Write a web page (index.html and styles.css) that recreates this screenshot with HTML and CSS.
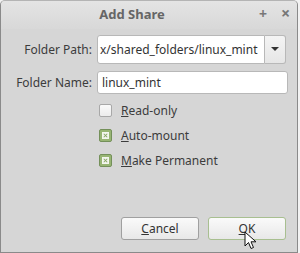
FILE: index.html
```html
<!DOCTYPE html>
<html>
<head>
<meta charset="utf-8">
<link rel="stylesheet" href="styles.css">
</head>
<body>
<div class="window">
  <div class="titlebar">
    <span class="title">Add Share</span>
    <span class="tb-btn tb-max">+</span>
    <span class="tb-btn tb-close">×</span>
  </div>
  <div class="content">
    <div class="row row-path">
      <span class="label">Folder Path:</span>
      <div class="combo">
        <div class="entry combo-entry">x/shared_folders/linux_mint</div>
        <div class="combo-btn"><span class="arrow"></span></div>
      </div>
    </div>
    <div class="row row-name">
      <span class="label">Folder Name:</span>
      <div class="entry name-entry">linux_mint</div>
    </div>
    <div class="checks">
      <div class="check"><span class="box"></span><span class="ctext"><u>R</u>ead-only</span></div>
      <div class="check"><span class="box on"><span class="mark"></span></span><span class="ctext"><u>A</u>uto-mount</span></div>
      <div class="check"><span class="box on"><span class="mark"></span></span><span class="ctext"><u>M</u>ake Permanent</span></div>
    </div>
    <div class="buttons">
      <div class="btn"><span><u>C</u>ancel</span></div>
      <div class="btn btn-ok"><span><u>O</u>K</span>
        <svg class="cursor" width="14" height="20" viewBox="0 0 14 20"><path d="M1 1 L1 15 L4.5 11.5 L7 17.5 L9.5 16.5 L7 10.8 L12 10.8 Z" fill="#fff" stroke="#111" stroke-width="1" stroke-linejoin="round"/></svg>
      </div>
    </div>
  </div>
</div>
</body>
</html>
```
FILE: styles.css
```css
html, body {
  margin: 0;
  padding: 0;
  background: #f2f2f2;
}
body {
  font-family: "Noto Sans", "DejaVu Sans", sans-serif;
  font-size: 12px;
  color: #3c3c3c;
}
.window {
  width: 298px;
  height: 253px;
  box-sizing: border-box;
  border: 1px solid #8a8a8a;
  border-top-color: #b4b4b4;
  border-radius: 5px 5px 0 0;
  background: #d6d6d6;
  display: flex;
  flex-direction: column;
}
.titlebar {
  height: 28px;
  flex: none;
  position: relative;
  display: flex;
  align-items: center;
  justify-content: center;
  background: linear-gradient(#e4e4e4, #d8d8d8);
  border-radius: 4px 4px 0 0;
}
.title {
  font-weight: bold;
  font-size: 13px;
  color: #666;
  margin-left: -34px;
  margin-top: -2px;
}
.tb-btn {
  position: absolute;
  top: 3px;
  font-weight: bold;
  color: #777;
  font-size: 14px;
}
.tb-max { left: 258px; }
.tb-close { left: 280px; font-size: 16px; top: 1px; }
.content {
  flex: 1;
  display: flex;
  flex-direction: column;
  padding: 5px 0 0 0;
}
.row {
  display: flex;
  align-items: center;
}
.label {
  width: 91px;
  text-align: right;
  flex: none;
}
.row-path { height: 30px; }
.combo {
  margin-left: 5px;
  display: flex;
  height: 29px;
}
.entry {
  box-sizing: border-box;
  background: #fff;
  border: 1px solid #b8b8b8;
  border-radius: 3px;
  color: #333;
  display: flex;
  align-items: center;
  padding-left: 2px;
  overflow: hidden;
  white-space: nowrap;
}
.combo-entry {
  width: 168px;
  height: 29px;
  border-radius: 3px 0 0 3px;
}
.combo-btn {
  width: 21px;
  height: 29px;
  box-sizing: border-box;
  border: 1px solid #b8b8b8;
  border-left: none;
  border-radius: 0 3px 3px 0;
  background: linear-gradient(#f4f4f4, #e6e6e6);
  display: flex;
  align-items: center;
  justify-content: center;
}
.arrow {
  width: 0;
  height: 0;
  border-left: 4px solid transparent;
  border-right: 4px solid transparent;
  border-top: 4px solid #333;
}
.row-name {
  margin-top: 7px;
  height: 23px;
}
.name-entry {
  margin-left: 5px;
  width: 191px;
  height: 23px;
  padding-left: 4px;
}
.checks {
  margin-top: 9px;
  padding-left: 98px;
  display: flex;
  flex-direction: column;
  gap: 11px;
}
.check {
  display: flex;
  align-items: center;
  height: 14px;
}
.box {
  width: 13px;
  height: 13px;
  box-sizing: border-box;
  border: 1px solid #a8a8a8;
  border-radius: 2px;
  background: linear-gradient(#fafafa, #ececec);
  display: flex;
  align-items: center;
  justify-content: center;
}
.box.on {
  background: #98b574;
  border-color: #74905a;
}
.mark {
  width: 7px;
  height: 7px;
  background: #f4f6ef;
  position: relative;
}
.mark::before, .mark::after {
  content: "";
  position: absolute;
  left: 3px;
  top: 1px;
  width: 1px;
  height: 5px;
  background: #86a463;
  transform: rotate(45deg);
}
.mark::after { transform: rotate(-45deg); }
.ctext {
  margin-left: 9px;
}
.buttons {
  margin-top: auto;
  margin-bottom: 12px;
  display: flex;
  justify-content: flex-end;
  gap: 9px;
  padding-right: 11px;
}
.btn {
  width: 78px;
  height: 23px;
  box-sizing: border-box;
  border: 1px solid #a0a0a0;
  border-radius: 3px;
  background: linear-gradient(#fafafa, #e8e8e8);
  display: flex;
  align-items: center;
  justify-content: center;
  color: #333;
  position: relative;
}
.btn-ok {
  border-color: #a8bf90;
}
.cursor {
  position: absolute;
  left: 35px;
  top: 13px;
}
```
